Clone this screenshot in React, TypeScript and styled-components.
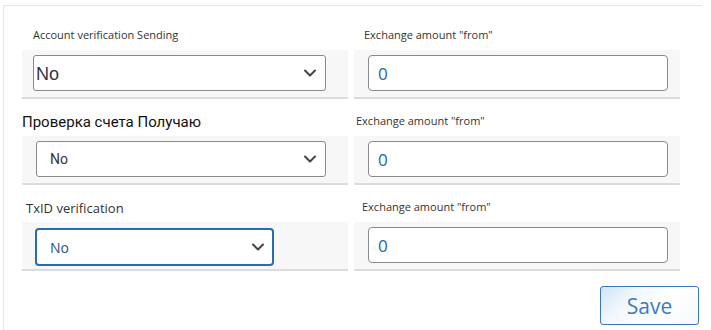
import React from 'react'
import styled, { createGlobalStyle } from 'styled-components'

const GlobalStyle = createGlobalStyle`
  html, body {
    margin: 0;
    padding: 0;
    background: #ffffff;
  }
  body {
    font-family: "Open Sans", "Noto Sans", sans-serif;
  }
`

type Variant = 'plain' | 'large' | 'focus'

const Page = styled.div`
  width: 711px;
  height: 330px;
  overflow: hidden;
  padding: 5px 0 0 3px;
  box-sizing: border-box;
`

const Card = styled.div`
  width: 699px;
  height: 340px;
  border-top: 1px solid #e6e6e6;
  border-left: 1px solid #e6e6e6;
  box-sizing: border-box;
  padding: 0 0 0 18px;
  display: flex;
  flex-direction: column;
`

const Row = styled.div<{ $top: number }>`
  display: grid;
  grid-template-columns: 326px 326px;
  column-gap: 6px;
  margin-top: ${p => p.$top}px;
`

const Field = styled.div`
  display: flex;
  flex-direction: column;
  justify-content: flex-end;
`

const Label = styled.div<{ $kind: 'small' | 'ru' | 'medium'; $indent: number }>`
  padding-left: ${p => p.$indent}px;
  color: ${p => (p.$kind === 'ru' ? '#111' : '#333')};
  font-family: ${p => (p.$kind === 'ru' ? 'Roboto, "Noto Sans", sans-serif' : '"Open Sans", "Noto Sans", sans-serif')};
  font-size: ${p => (p.$kind === 'ru' ? 15 : p.$kind === 'medium' ? 13 : 11)}px;
  line-height: ${p => (p.$kind === 'ru' ? 18 : 16)}px;
  margin-bottom: ${p => (p.$kind === 'ru' ? 5 : p.$kind === 'medium' ? 6 : 7)}px;
  white-space: nowrap;
`

const Cell = styled.div<{ $left: number; $right: number }>`
  height: 49px;
  background: #f7f7f7;
  border-bottom: 2px solid #dcdcdc;
  padding: 5px ${p => p.$right}px 0 ${p => p.$left}px;
  box-sizing: border-box;
`

const SelectBox = styled.div<{ $variant: Variant }>`
  height: ${p => (p.$variant === 'focus' ? 38 : 36)}px;
  margin-top: ${p => (p.$variant === 'focus' ? 1 : 0)}px;
  background: #fff;
  border: ${p => (p.$variant === 'focus' ? '2px solid #2b6cb0' : '1px solid #8a8a8a')};
  border-radius: ${p => (p.$variant === 'focus' ? 4 : 3)}px;
  box-sizing: border-box;
  display: flex;
  align-items: center;
  justify-content: space-between;
  padding: 0 ${p => (p.$variant === 'focus' ? 7 : 8)}px 0 ${p => (p.$variant === 'large' ? 2 : 13)}px;
`

const SelectText = styled.span<{ $variant: Variant }>`
  font-family: ${p =>
    p.$variant === 'large'
      ? '"Liberation Sans", Arial, sans-serif'
      : p.$variant === 'focus'
      ? '"Open Sans", "Noto Sans", sans-serif'
      : 'Roboto, "Noto Sans", sans-serif'};
  font-size: ${p => (p.$variant === 'large' ? 18 : 14)}px;
  margin-top: ${p => (p.$variant === 'large' ? 3 : 0)}px;
  color: ${p => (p.$variant === 'focus' ? '#2d4f86' : '#333347')};
`

const Chevron = styled.svg`
  width: 14px;
  height: 14px;
  flex: none;
`

const InputBox = styled.div`
  height: 36px;
  background: #fff;
  border: 1px solid #8a8a8a;
  border-radius: 4px;
  box-sizing: border-box;
  display: flex;
  align-items: center;
  padding-left: 9px;
  font-family: "Open Sans", "Noto Sans", sans-serif;
  font-size: 17px;
  color: #2a64a8;
`

const Footer = styled.div`
  display: flex;
  justify-content: flex-end;
  margin-top: 15px;
  width: 677px;
`

const SaveButton = styled.button`
  width: 99px;
  height: 39px;
  border: 1px solid #3a78bd;
  border-radius: 3px;
  background: linear-gradient(135deg, #cfe4f7 0%, #f2f8fd 30%, #ffffff 60%, #f4f9fd 100%);
  color: #3b7bbf;
  font-family: "Open Sans", "Noto Sans", sans-serif;
  font-size: 21px;
  padding: 0;
  cursor: pointer;
`

const ChevronIcon = () => (
  <Chevron viewBox="0 0 14 14">
    <path d="M2 4.5 L7 9.5 L12 4.5" fill="none" stroke="#444" strokeWidth="2" strokeLinecap="round" strokeLinejoin="round" />
  </Chevron>
)

interface RowData {
  label: string
  labelKind: 'small' | 'ru' | 'medium'
  labelIndent: number
  rightIndent: number
  variant: Variant
  selectLeft: number
  selectRight: number
  top: number
}

const rows: RowData[] = [
  { label: 'Account verification Sending', labelKind: 'small', labelIndent: 11, rightIndent: 10, variant: 'large', selectLeft: 11, selectRight: 22, top: 21 },
  { label: 'Проверка счета Получаю', labelKind: 'ru', labelIndent: 0, rightIndent: 2, variant: 'plain', selectLeft: 14, selectRight: 22, top: 14 },
  { label: 'TxID verification', labelKind: 'medium', labelIndent: 4, rightIndent: 8, variant: 'focus', selectLeft: 13, selectRight: 74, top: 14 },
]

export default function App() {
  return (
    <>
      <GlobalStyle />
      <Page>
        <Card>
          {rows.map((r, i) => (
            <Row key={i} $top={r.top}>
              <Field>
                <Label $kind={r.labelKind} $indent={r.labelIndent}>{r.label}</Label>
                <Cell $left={r.selectLeft} $right={r.selectRight}>
                  <SelectBox $variant={r.variant}>
                    <SelectText $variant={r.variant}>No</SelectText>
                    <ChevronIcon />
                  </SelectBox>
                </Cell>
              </Field>
              <Field>
                <Label $kind="small" $indent={r.rightIndent}>Exchange amount "from"</Label>
                <Cell $left={14} $right={12}>
                  <InputBox>0</InputBox>
                </Cell>
              </Field>
            </Row>
          ))}
          <Footer>
            <SaveButton>Save</SaveButton>
          </Footer>
        </Card>
      </Page>
    </>
  )
}
